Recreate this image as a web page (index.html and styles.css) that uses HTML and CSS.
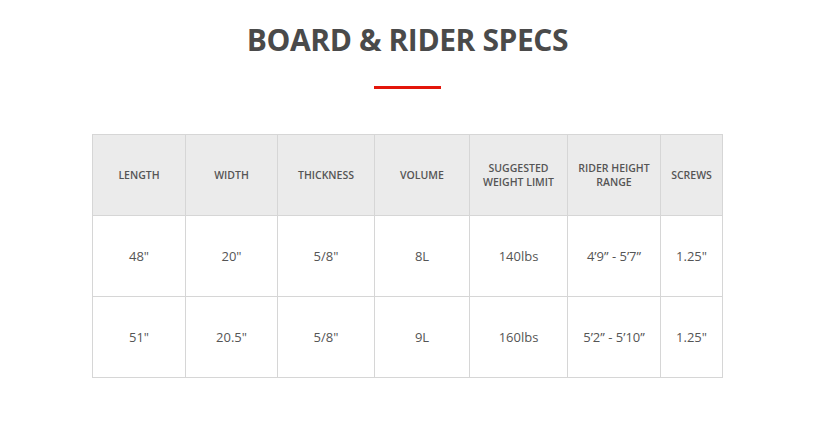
FILE: index.html
```html
<!DOCTYPE html>
<html>
<head>
<meta charset="utf-8">
<link rel="stylesheet" href="styles.css">
</head>
<body>
<section class="specs">
  <h2 class="title">BOARD &amp; RIDER SPECS</h2>
  <div class="rule"></div>
  <table class="table">
    <colgroup>
      <col class="c1"><col class="c2"><col class="c3"><col class="c4"><col class="c5"><col class="c6"><col class="c7">
    </colgroup>
    <thead>
      <tr>
        <th>LENGTH</th>
        <th>WIDTH</th>
        <th>THICKNESS</th>
        <th>VOLUME</th>
        <th>SUGGESTED<br>WEIGHT LIMIT</th>
        <th>RIDER HEIGHT<br>RANGE</th>
        <th>SCREWS</th>
      </tr>
    </thead>
    <tbody>
      <tr>
        <td>48"</td><td>20"</td><td>5/8"</td><td>8L</td><td>140lbs</td><td>4’9” - 5’7”</td><td>1.25"</td>
      </tr>
      <tr>
        <td>51"</td><td>20.5"</td><td>5/8"</td><td>9L</td><td>160lbs</td><td>5’2” - 5’10”</td><td>1.25"</td>
      </tr>
    </tbody>
  </table>
</section>
</body>
</html>
```
FILE: styles.css
```css
html, body {
  margin: 0;
  padding: 0;
  background: #fff;
}
body {
  font-family: "Open Sans", "Liberation Sans", sans-serif;
  color: #555;
}
.specs {
  display: flex;
  flex-direction: column;
  align-items: center;
  padding-top: 20px;
  padding-right: 10px;
}
.title {
  margin: 0;
  font-family: "Open Sans", sans-serif;
  font-weight: 700;
  font-size: 30px;
  line-height: 40px;
  letter-spacing: -0.4px;
  color: #4a4a4a;
}
.rule {
  width: 67px;
  height: 3px;
  background: #e3160b;
  margin-top: 26px;
  margin-bottom: 45px;
}
.table {
  border-collapse: collapse;
  table-layout: fixed;
  width: 630px;
}
.c1 { width: 93px; }
.c2 { width: 92px; }
.c3 { width: 97px; }
.c4 { width: 95px; }
.c5 { width: 98px; }
.c6 { width: 93px; }
.c7 { width: 62px; }
.table th,
.table td {
  border: 1px solid #d6d6d6;
  text-align: center;
  vertical-align: middle;
  height: 80px;
  padding: 0;
}
.table th {
  background: #ebebeb;
  font-size: 10.5px;
  font-weight: 600;
  line-height: 14px;
  color: #555;
}
.table td {
  font-size: 13px;
  color: #555;
}
```
